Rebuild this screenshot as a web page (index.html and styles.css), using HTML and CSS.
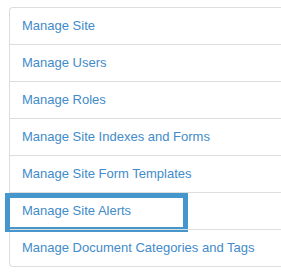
FILE: index.html
```html
<!DOCTYPE html>
<html lang="en">
<head>
  <meta charset="utf-8">
  <title>Admin menu</title>
  <link rel="stylesheet" href="styles.css">
</head>
<body>
  <ul class="menu">
    <li class="menu-item"><a href="#">Manage Site</a></li>
    <li class="menu-item"><a href="#">Manage Users</a></li>
    <li class="menu-item"><a href="#">Manage Roles</a></li>
    <li class="menu-item"><a href="#">Manage Site Indexes and Forms</a></li>
    <li class="menu-item"><a href="#">Manage Site Form Templates</a></li>
    <li class="menu-item marked"><a href="#">Manage Site Alerts</a><span class="mark"></span></li>
    <li class="menu-item"><a href="#">Manage Document Categories and Tags</a></li>
  </ul>
</body>
</html>
```

FILE: styles.css
```css
body {
  margin: 0;
  padding: 7px 0 0 9px;
  background: #fff;
  font-family: "Liberation Sans", Arial, sans-serif;
  font-size: 13px;
}

.menu {
  list-style: none;
  margin: 0;
  padding: 0;
  border: 1px solid #ddd;
  border-right: none;
  border-radius: 4px 0 0 4px;
}

.menu-item {
  position: relative;
  padding: 9px 12px;
  line-height: 18px;
  border-top: 1px solid #ddd;
  white-space: nowrap;
}
.menu-item:first-child { border-top: none; }

.menu-item a {
  color: #428bca;
  text-decoration: none;
}

/* blue highlight frame around one item */
.mark {
  position: absolute;
  left: -5px;
  top: 0;
  width: 183px;
  height: 39px;
  box-sizing: border-box;
  border: 5px solid #4596cd;
}
```
